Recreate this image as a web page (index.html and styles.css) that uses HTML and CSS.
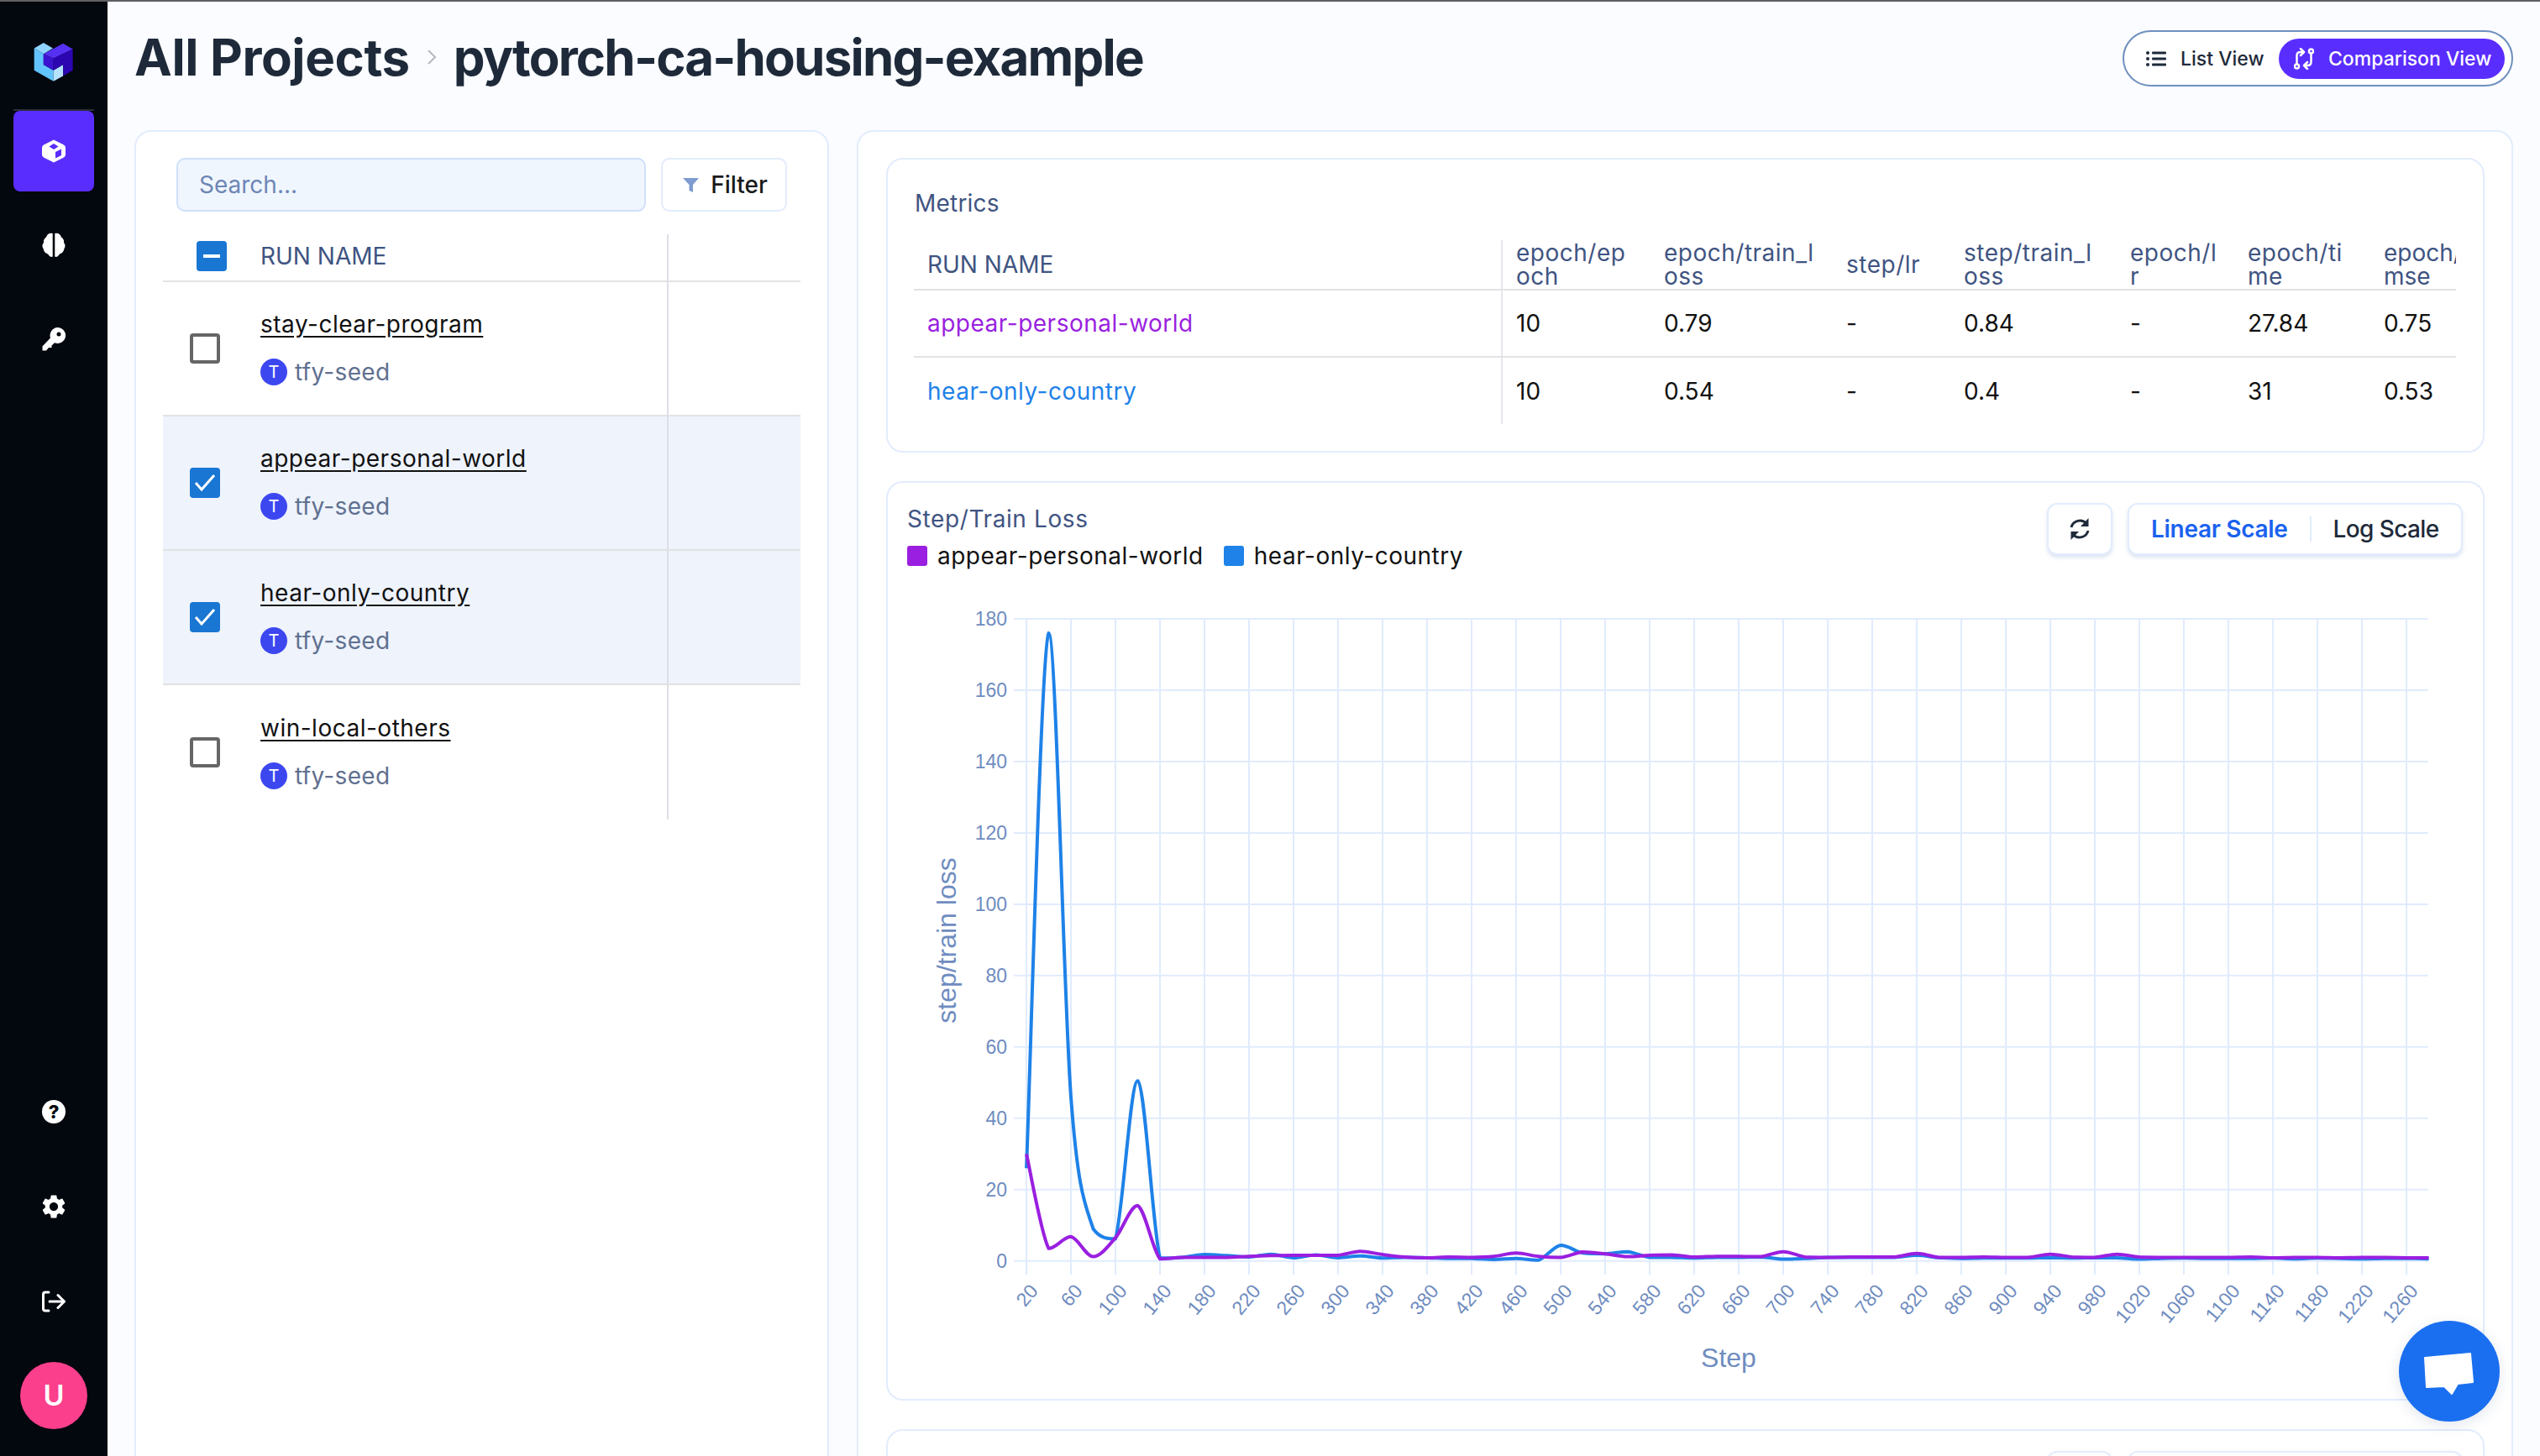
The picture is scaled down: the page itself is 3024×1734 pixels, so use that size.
FILE: index.html
```html
<!DOCTYPE html>
<html lang="en">
<head>
    <meta charset="UTF-8">
    <meta name="viewport" content="width=device-width, initial-scale=1.0">
    <title>pytorch-ca-housing-example</title>
    <link rel="stylesheet" href="styles.css">
</head>
<body>
<div class="app">
    <nav class="sidebar">
        <div class="logo">
            <svg width="48" height="48" viewBox="50 30 142 142">
                <polygon fill="#8fd4ff" points="52,52 85,33 118,52 85,72"/>
                <polygon fill="#62c4ff" points="52,52 85,72 85,110 120,130 120,168 52,130"/>
                <polygon fill="#b5e3ff" points="120,130 154,110 154,150 120,168"/>
                <polygon fill="#5530f0" points="85,72 154,35 188,55 120,88"/>
                <polygon fill="#3a12d0" points="85,72 120,88 120,130 85,110"/>
                <polygon fill="#2c06b0" points="120,88 188,55 188,130 154,150 154,110 120,130"/>
            </svg>
        </div>
        <div class="nav-group">
            <a class="nav-item active">
                <svg width="28" height="28" viewBox="0 0 28 28">
                    <path fill="#fff" fill-rule="evenodd" d="M14 0.5 26 6.5Q28 7.5 28 10V18Q28 20.500 26 21.500L14 27.500 2 21.500Q0 20.500 0 18V10Q0 7.500 2 6.500ZM14 5 8.500 8.500 14 12 19.500 8.500ZM16 15V22.500L23 19V11.500Z"/>
                </svg>
            </a>
            <a class="nav-item">
                <svg width="28" height="30" viewBox="0 0 28 30">
                    <path fill="#fff" d="M12.700 1C9 0 6 2 5 5.500 2.500 7 1.500 9.500 2 12 0 14 0 17 1.500 19 2 22.500 4.500 25 7 25.500 9 29 11.500 29.500 12.700 28.500ZM15.300 1C19 0 22 2 23 5.500 25.500 7 26.500 9.500 26 12 28 14 28 17 26.500 19 26 22.500 23.500 25 21 25.500 19 29 16.500 29.500 15.300 28.500Z"/>
                </svg>
            </a>
            <a class="nav-item">
                <svg width="28" height="28" viewBox="0 0 28 28">
                    <path fill="#fff" fill-rule="evenodd" d="M18.500 0A9.500 9.500 0 1 1 15 18.300L11.500 21.500 11.500 24 8 24 5 27.500H0.500V22.500L10 12.500A9.500 9.500 0 0 1 18.500 0ZM20 5.500A2.500 2.500 0 1 0 20 10.500 2.500 2.500 0 0 0 20 5.500Z"/>
                </svg>
            </a>
        </div>
        <div class="nav-bottom">
            <a class="nav-item"><span class="help-icon">?</span></a>
            <a class="nav-item">
                <svg width="34" height="34" viewBox="0 0 24 24">
                    <path fill="#fff" d="M19.140 12.940c.04-.3.06-.61.06-.94 0-.32-.02-.64-.07-.94l2.030-1.580c.18-.14.23-.41.12-.61l-1.920-3.320c-.12-.22-.37-.29-.59-.22l-2.390.96c-.5-.38-1.030-.7-1.620-.94l-.36-2.540c-.04-.24-.24-.41-.48-.41h-3.840c-.24 0-.43.17-.47.41l-.36 2.540c-.59.24-1.130.57-1.620.94l-2.390-.96c-.22-.08-.47 0-.59.22L2.740 8.870c-.12.21-.08.47.12.61l2.030 1.580c-.05.3-.09.63-.09.94s.02.64.07.94l-2.030 1.580c-.18.14-.23.41-.12.61l1.920 3.320c.12.22.37.29.59.22l2.390-.96c.5.38 1.030.7 1.620.94l.36 2.540c.05.24.24.41.48.41h3.840c.24 0 .44-.17.47-.41l.36-2.540c.59-.24 1.130-.56 1.620-.94l2.390.96c.22.08.47 0 .59-.22l1.920-3.320c.12-.22.07-.47-.12-.61l-2.010-1.580zM12 15.600c-1.980 0-3.600-1.620-3.600-3.600s1.620-3.600 3.600-3.600 3.600 1.620 3.600 3.600-1.620 3.600-3.600 3.600z"/>
                </svg>
            </a>
            <a class="nav-item">
                <svg width="28" height="26" viewBox="0 0 28 26" fill="none" stroke="#fff" stroke-width="3" stroke-linecap="round" stroke-linejoin="round">
                    <path d="M8 2H4Q1.500 2 1.500 4.500V21.500Q1.500 24 4 24H8"/>
                    <path d="M9 13H26M19 5.500 26.500 13 19 20.500"/>
                </svg>
            </a>
            <div class="avatar">U</div>
        </div>
    </nav>

    <main class="main">
        <header class="page-head">
            <h1 class="crumbs">
                <span class="crumb-root">All Projects</span>
                <svg class="crumb-sep" width="12" height="20" viewBox="0 0 12 20" fill="none" stroke="#b3b8c2" stroke-width="2"><path d="M2 2 10 10 2 18"/></svg>
                <span class="crumb-page">pytorch-ca-housing-example</span>
            </h1>
            <div class="view-toggle">
                <div class="view-btn">
                    <svg width="24" height="20" viewBox="0 0 24 20" fill="#1e2a3a">
                        <circle cx="2" cy="3" r="2"/><circle cx="2" cy="10" r="2"/><circle cx="2" cy="17" r="2"/>
                        <rect x="7" y="1.500" width="17" height="3" rx="1"/><rect x="7" y="8.500" width="17" height="3" rx="1"/><rect x="7" y="15.500" width="17" height="3" rx="1"/>
                    </svg>
                    List View
                </div>
                <div class="view-btn active">
                    <svg width="24" height="26" viewBox="0 0 24 26" fill="none" stroke="#fff" stroke-width="2.500" stroke-linecap="round" stroke-linejoin="round">
                        <circle cx="3.500" cy="22" r="2.500"/><circle cx="20.500" cy="4" r="2.500"/>
                        <path d="M3.500 19V9Q3.500 5 8 5H11M8 1 12 5 8 9"/>
                        <path d="M20.500 7V17Q20.500 21 16 21H13M16 17 12 21 16 25"/>
                    </svg>
                    Comparison View
                </div>
            </div>
        </header>

        <div class="columns">
            <section class="card runs-card">
                <div class="runs-tools">
                    <div class="search">Search...</div>
                    <div class="filter-btn">
                        <svg width="19" height="17" viewBox="0 0 19 17"><path fill="#7e9ccf" d="M0 0H19L12 8V17L7.500 15V8Z"/></svg>
                        Filter
                    </div>
                </div>
                <div class="runs-table">
                    <div class="runs-row runs-head">
                        <div class="runs-cell">
                            <span class="check head-check"><svg width="20" height="4" viewBox="0 0 20 4"><rect width="20" height="4" fill="#fff"/></svg></span>
                            <span class="runs-title">RUN NAME</span>
                        </div>
                    </div>
                    <div class="runs-row">
                        <div class="runs-cell">
                            <span class="check"></span>
                            <div class="run-info">
                                <a class="run-name">stay-clear-program</a>
                                <div class="run-owner"><span class="owner-dot">T</span>tfy-seed</div>
                            </div>
                        </div>
                    </div>
                    <div class="runs-row selected">
                        <div class="runs-cell">
                            <span class="check checked"><svg width="28" height="22" viewBox="0 0 28 22" fill="none" stroke="#fff" stroke-width="3"><path d="M3 11 10 19 25 2"/></svg></span>
                            <div class="run-info">
                                <a class="run-name">appear-personal-world</a>
                                <div class="run-owner"><span class="owner-dot">T</span>tfy-seed</div>
                            </div>
                        </div>
                    </div>
                    <div class="runs-row selected">
                        <div class="runs-cell">
                            <span class="check checked"><svg width="28" height="22" viewBox="0 0 28 22" fill="none" stroke="#fff" stroke-width="3"><path d="M3 11 10 19 25 2"/></svg></span>
                            <div class="run-info">
                                <a class="run-name">hear-only-country</a>
                                <div class="run-owner"><span class="owner-dot">T</span>tfy-seed</div>
                            </div>
                        </div>
                    </div>
                    <div class="runs-row last">
                        <div class="runs-cell">
                            <span class="check"></span>
                            <div class="run-info">
                                <a class="run-name">win-local-others</a>
                                <div class="run-owner"><span class="owner-dot">T</span>tfy-seed</div>
                            </div>
                        </div>
                    </div>
                </div>
            </section>

            <section class="card compare-card">
                <div class="panel metrics-panel">
                    <div class="panel-title metrics-title">Metrics</div>
                    <div class="metrics-scroll">
                        <table class="metrics-table">
                            <colgroup>
                                <col class="c-name"><col class="c1"><col class="c2"><col class="c3"><col class="c4"><col class="c5"><col class="c6"><col class="c7">
                            </colgroup>
                            <thead>
                                <tr>
                                    <th class="th-plain">RUN NAME</th>
                                    <th>epoch/ep<br>och</th>
                                    <th>epoch/train_l<br>oss</th>
                                    <th>step/lr</th>
                                    <th>step/train_l<br>oss</th>
                                    <th>epoch/l<br>r</th>
                                    <th>epoch/ti<br>me</th>
                                    <th class="th-plain">epoch/<br>mse</th>
                                </tr>
                            </thead>
                            <tbody>
                                <tr>
                                    <td class="run-purple">appear-personal-world</td>
                                    <td>10</td><td>0.79</td><td>-</td><td>0.84</td><td>-</td><td>27.84</td><td>0.75</td>
                                </tr>
                                <tr>
                                    <td class="run-blue">hear-only-country</td>
                                    <td>10</td><td>0.54</td><td>-</td><td>0.4</td><td>-</td><td>31</td><td>0.53</td>
                                </tr>
                            </tbody>
                        </table>
                    </div>
                </div>

                <div class="panel chart-panel">
                    <div class="chart-head">
                        <div class="chart-info">
                            <div class="panel-title chart-title">Step/Train Loss</div>
                            <div class="legend">
                                <span class="swatch swatch-purple"></span>appear-personal-world
                                <span class="swatch swatch-blue"></span>hear-only-country
                            </div>
                        </div>
                        <div class="chart-tools">
                            <div class="tool-btn">
                                <svg width="28" height="28" viewBox="0 0 28 28" fill="none" stroke="#1e2a3a" stroke-width="3">
                                    <path d="M4 12A10.500 10.500 0 0 1 22 7.500"/><path fill="#1e2a3a" stroke="none" d="M24.500 1V11H15Z"/>
                                    <path d="M24 16A10.500 10.500 0 0 1 6 20.500"/><path fill="#1e2a3a" stroke="none" d="M3.500 27V17H13Z"/>
                                </svg>
                            </div>
                            <div class="scale-group">
                                <span class="scale on">Linear Scale</span>
                                <span class="scale">Log Scale</span>
                            </div>
                        </div>
                    </div>
                    <svg id="lossChart" class="chart" viewBox="0 0 1897 966"></svg>
                </div>

                <div class="panel chart-panel">
                    <div class="chart-head">
                        <div class="chart-info"></div>
                        <div class="chart-tools">
                            <div class="tool-btn"></div>
                            <div class="scale-group"></div>
                        </div>
                    </div>
                </div>
            </section>
        </div>
    </main>
</div>

<div class="chat-bubble">
    <svg width="120" height="120" viewBox="0 0 120 120">
        <polygon fill="#fff" stroke="#fff" stroke-width="2" stroke-linejoin="round" points="31,44 85,39 88,73 70,75 63,87 54,78 33,79"/>
    </svg>
</div>

<script src="chart.js"></script>
</body>
</html>
```
FILE: styles.css
```css
* {
    box-sizing: border-box;
}
html, body {
    margin: 0;
    height: 1734px;
    overflow: hidden;
}
body {
    font-family: Inter, "Noto Sans", sans-serif;
    font-size: 28px;
    line-height: 28px;
    color: #111;
    background-color: #fafcff;
    border-top: 2px solid #5f6062;
    position: relative;
}
.app {
    display: flex;
    height: 1732px;
}

/* sidebar */
.sidebar {
    width: 128px;
    flex: none;
    background-color: #03070e;
    display: flex;
    flex-direction: column;
    align-items: center;
    padding-bottom: 32px;
}
.logo {
    height: 130px;
    padding-top: 48px;
    width: 96px;
    text-align: center;
    border-bottom: 2px solid #2a2f3a;
}
.nav-group {
    display: flex;
    flex-direction: column;
    gap: 16px;
}
.nav-bottom {
    margin-top: auto;
    display: flex;
    flex-direction: column;
    align-items: center;
    gap: 17px;
}
.nav-item {
    width: 96px;
    height: 96px;
    border-radius: 8px;
    display: flex;
    align-items: center;
    justify-content: center;
}
.nav-item.active {
    background-color: #5a2dff;
}
.help-icon {
    width: 28px;
    height: 28px;
    border-radius: 50%;
    background: #fff;
    color: #03070e;
    font-size: 22px;
    font-weight: 800;
    line-height: 28px;
    text-align: center;
}
.avatar {
    width: 80px;
    height: 80px;
    border-radius: 50%;
    background-color: #fb3f8c;
    color: #fff;
    font-size: 34px;
    font-weight: 600;
    line-height: 80px;
    text-align: center;
    margin-top: 7px;
}

/* page head */
.main {
    flex: 1;
    min-width: 0;
    padding: 0 32px;
}
.page-head {
    height: 153px;
    display: flex;
    align-items: flex-start;
    justify-content: space-between;
}
.crumbs {
    margin: 36px 0 0;
    font-size: 60px;
    line-height: 60px;
    font-weight: 700;
    color: #1e2a3a;
    display: flex;
    align-items: center;
    gap: 20px;
}
.crumb-root {
    letter-spacing: -0.4px;
}
.crumb-page {
    letter-spacing: -1.8px;
}
.view-toggle {
    margin-top: 34px;
    height: 67px;
    width: 465px;
    padding: 0 8px 0 26px;
    border: 2px solid #6f8fbf;
    border-radius: 34px;
    background: #fff;
    display: flex;
    align-items: center;
    justify-content: space-between;
}
.view-btn {
    display: flex;
    align-items: center;
    gap: 17px;
    font-size: 23px;
    font-weight: 500;
    color: #1e2a3a;
    white-space: nowrap;
}
.view-btn.active {
    height: 48px;
    width: 269px;
    padding-left: 18px;
    border-radius: 24px;
    background-color: #5a2dff;
    color: #fff;
}

/* cards */
.columns {
    display: grid;
    grid-template-columns: 827px 1972px;
    gap: 33px;
}
.card {
    background: #fff;
    border: 2px solid #e2ecfd;
    border-radius: 20px;
    height: 1640px;
}
.runs-card {
    padding: 31px 32px;
}
.runs-tools {
    display: flex;
    gap: 18px;
    padding: 0 16px;
}
.search {
    width: 560px;
    height: 64px;
    padding-left: 25px;
    background-color: #f0f6fe;
    border: 2px solid #cfe0fb;
    border-radius: 10px;
    color: #6d86b5;
    line-height: 60px;
}
.filter-btn {
    width: 150px;
    height: 64px;
    padding-left: 24px;
    border: 2px solid #e2ecfd;
    border-radius: 10px;
    display: flex;
    align-items: center;
    gap: 14px;
    font-weight: 500;
    color: #1a1a1a;
}
.runs-table {
    margin-top: 27px;
}
.runs-row {
    border-bottom: 2px solid #e2e2e2;
    height: 160px;
}
.runs-row.runs-head {
    height: 57px;
}
.runs-row.last {
    border-bottom: none;
}
.runs-row.selected {
    background-color: #eef3fc;
}
.runs-cell {
    width: 602px;
    height: 100%;
    padding-left: 32px;
    border-right: 2px solid #dcdfe5;
    display: flex;
    align-items: center;
}
.runs-head .runs-cell {
    padding-left: 40px;
    padding-bottom: 3px;
}
.check {
    width: 36px;
    height: 36px;
    flex: none;
    border: 4px solid #666;
    border-radius: 4px;
    display: flex;
    align-items: center;
    justify-content: center;
}
.check.checked, .check.head-check {
    background-color: #1976d2;
    border: none;
}
.runs-title {
    margin-left: 40px;
    color: #3f5482;
}
.run-info {
    margin-left: 48px;
}
.run-name {
    color: #111;
    letter-spacing: 0.5px;
    text-decoration: underline;
    text-underline-offset: 4px;
}
.run-owner {
    margin-top: 27px;
    display: flex;
    align-items: center;
    gap: 9px;
    color: #5f7090;
    letter-spacing: 0.3px;
}
.owner-dot {
    width: 32px;
    height: 32px;
    border-radius: 50%;
    background-color: #3d47f0;
    color: #fff;
    font-size: 20px;
    line-height: 32px;
    text-align: center;
}

/* right side */
.compare-card {
    padding: 31px 32px 0 33px;
    display: flex;
    flex-direction: column;
    gap: 34px;
}
.panel {
    border: 2px solid #e2ecfd;
    border-radius: 20px;
    background: #fff;
}
.panel-title {
    color: #3f5482;
}
.metrics-panel {
    height: 351px;
    flex: none;
    padding: 38px 32px 0 31px;
}
.metrics-title {
    padding-left: 1px;
    letter-spacing: 0.2px;
}
.metrics-scroll {
    margin-top: 30px;
    overflow: hidden;
}
.metrics-table {
    table-layout: fixed;
    width: 1934px;
    border-collapse: collapse;
}
.c-name { width: 700px; }
.c1 { width: 177px; }
.c2 { width: 217px; }
.c3 { width: 140px; }
.c4 { width: 198px; }
.c5 { width: 140px; }
.c6 { width: 162px; }
.c7 { width: 200px; }
.metrics-table th {
    height: 59px;
    padding: 0 16px;
    font-weight: 400;
    text-align: left;
    vertical-align: middle;
    color: #3f5482;
    border-bottom: 2px solid #e2e2e2;
    white-space: nowrap;
    letter-spacing: 0.5px;
}
.metrics-table th.th-plain {
    letter-spacing: 0;
}
.metrics-table td {
    height: 80px;
    padding: 0 16px;
    border-bottom: 2px solid #e2e2e2;
}
.metrics-table tbody tr:last-child td {
    border-bottom: none;
}
.metrics-table th:first-child, .metrics-table td:first-child {
    border-right: 2px solid #e6e8ec;
}
.metrics-table td.run-purple { color: #9a1fe0; letter-spacing: 0.5px; }
.metrics-table td.run-blue { color: #1e82e8; letter-spacing: 0.5px; }

.chart-panel {
    flex: none;
}
.chart-head {
    padding: 24px 24px 0 23px;
    display: flex;
    justify-content: space-between;
}
.chart-info {
    padding-top: 5px;
}
.chart-title {
    letter-spacing: 0.6px;
}
.legend {
    margin-top: 16px;
    display: flex;
    align-items: center;
    color: #111;
    letter-spacing: 0.5px;
}
.swatch {
    width: 24px;
    height: 24px;
    border-radius: 3px;
    margin-right: 12px;
}
.swatch-purple { background-color: #9a1fe0; }
.swatch-blue { background-color: #1e82e8; margin-left: 24px; }
.chart-tools {
    display: flex;
    gap: 18px;
}
.tool-btn, .scale-group {
    height: 62px;
    background: #fff;
    border: 2px solid #e2ecfd;
    border-radius: 12px;
    box-shadow: 0 3px 4px rgba(120, 150, 200, 0.25);
    display: flex;
    align-items: center;
    justify-content: center;
}
.tool-btn {
    width: 78px;
}
.scale-group {
    width: 399px;
    justify-content: flex-start;
}
.scale {
    padding: 0 26px;
    font-weight: 500;
    color: #1e2a3a;
    line-height: 30px;
    white-space: nowrap;
    letter-spacing: -0.6px;
}
.scale.on {
    color: #1a62ee;
    font-weight: 600;
    letter-spacing: -0.3px;
    border-right: 2px solid #e2ecfd;
}
.chart {
    display: block;
    width: 1897px;
    height: 966px;
    margin-top: 24px;
}
.chart text {
    font-family: "Liberation Sans", Arial, sans-serif;
    fill: #6f8cc0;
}
.chart .tick {
    font-size: 23px;
}
.chart .axis-title {
    font-size: 32px;
}

/* floats over the page corner */
.chat-bubble {
    position: absolute;
    right: 48px;
    bottom: 41px;
    width: 120px;
    height: 120px;
    border-radius: 50%;
    background-color: #1a6ff0;
    box-shadow: 0 4px 16px rgba(60, 90, 140, 0.15);
}
```
FILE: chart.js
```js
// plot area in svg units
const X0 = 165, DX = 1.325, Y0 = 801.7, DY = 4.248;
const RIGHT = 1834, LEFT = 150, TOP = 37, TICK_END = 818;

// loss values, one every 20 steps starting at step 20
const blue = [26, 176, 46, 9, 6.2, 50.5, 0.8, 1, 1.8, 1.5, 1.1, 1.9, 0.9, 1.7, 0.9, 1.4, 0.8, 1, 0.9, 0.7, 0.7, 0.4, 0.7, 0.2,
    4.4, 2.2, 2, 2.6, 1, 1, 0.8, 1, 1, 1.1, 0.5, 0.7, 1, 1, 1, 1, 1.6, 0.9, 0.7, 0.8, 0.8, 0.8, 0.9, 0.8, 0.9, 0.9,
    0.5, 0.7, 0.8, 0.7, 0.7, 0.7, 0.8, 0.6, 0.8, 0.7, 0.6, 0.7, 0.7, 0.6];
const purple = [30, 3.5, 6.8, 1.2, 6.5, 15.5, 0.6, 1, 1, 1, 1.3, 1.5, 1.6, 1.6, 1.6, 2.7, 1.8, 1.1, 0.9, 1.1, 1, 1.3, 2.2, 1.3,
    1, 2.5, 2, 1.2, 1.6, 1.7, 1.1, 1.3, 1.3, 1.2, 2.6, 1.1, 1, 1.1, 1.1, 1.1, 2.1, 1, 1, 1.1, 1, 1, 1.9, 1.1, 1, 1.9,
    1.1, 1, 1, 1, 1, 1.1, 0.9, 1, 1, 0.9, 1, 1, 0.9, 0.9];

const svg = document.getElementById('lossChart');

function add(tag, attrs, text) {
    const el = document.createElementNS('http://www.w3.org/2000/svg', tag);
    for (const k in attrs) el.setAttribute(k, attrs[k]);
    if (text !== undefined) el.textContent = text;
    svg.appendChild(el);
    return el;
}

function xAt(step) { return X0 + (step - 20) * DX; }
function yAt(v) { return Y0 - v * DY; }

// horizontal grid and y ticks
for (let v = 0; v <= 180; v += 20) {
    add('line', { x1: LEFT, x2: RIGHT, y1: yAt(v), y2: yAt(v), stroke: '#e0ebfd', 'stroke-width': 2 });
    add('text', { class: 'tick', x: 142, y: yAt(v) + 8, 'text-anchor': 'end' }, v);
}

// vertical grid and x ticks
for (let s = 20; s <= 1260; s += 40) {
    const x = xAt(s);
    add('line', { x1: x, x2: x, y1: TOP, y2: TICK_END, stroke: '#e0ebfd', 'stroke-width': 2 });
    add('text', {
        class: 'tick', 'text-anchor': 'end',
        transform: 'translate(' + (x + 15) + ' ' + (TICK_END + 20) + ') rotate(-50)'
    }, s);
}

add('text', { class: 'axis-title', x: 1001, y: 928, 'text-anchor': 'middle' }, 'Step');
add('text', {
    class: 'axis-title', 'text-anchor': 'middle',
    transform: 'translate(81 420) rotate(-90)'
}, 'step/train loss');

function clamp(v, a, b) {
    return Math.min(Math.max(a, b), Math.max(Math.min(a, b), v));
}

// catmull-rom through the points, control points kept inside each segment so it does not overshoot
function spline(values) {
    const pts = values.map((v, i) => [xAt(20 + i * 20), yAt(v)]);
    let d = 'M' + pts[0][0] + ' ' + pts[0][1];
    for (let i = 0; i < pts.length - 1; i++) {
        const p0 = pts[Math.max(i - 1, 0)], p1 = pts[i], p2 = pts[i + 1], p3 = pts[Math.min(i + 2, pts.length - 1)];
        const c1x = p1[0] + (p2[0] - p0[0]) / 6, c1y = clamp(p1[1] + (p2[1] - p0[1]) / 6, p1[1], p2[1]);
        const c2x = p2[0] - (p3[0] - p1[0]) / 6, c2y = clamp(p2[1] - (p3[1] - p1[1]) / 6, p1[1], p2[1]);
        d += ' C' + c1x + ' ' + c1y + ' ' + c2x + ' ' + c2y + ' ' + p2[0] + ' ' + p2[1];
    }
    return d;
}

add('path', { d: spline(blue), fill: 'none', stroke: '#1e82e8', 'stroke-width': 4 });
add('path', { d: spline(purple), fill: 'none', stroke: '#9a1fe0', 'stroke-width': 4 });
```
